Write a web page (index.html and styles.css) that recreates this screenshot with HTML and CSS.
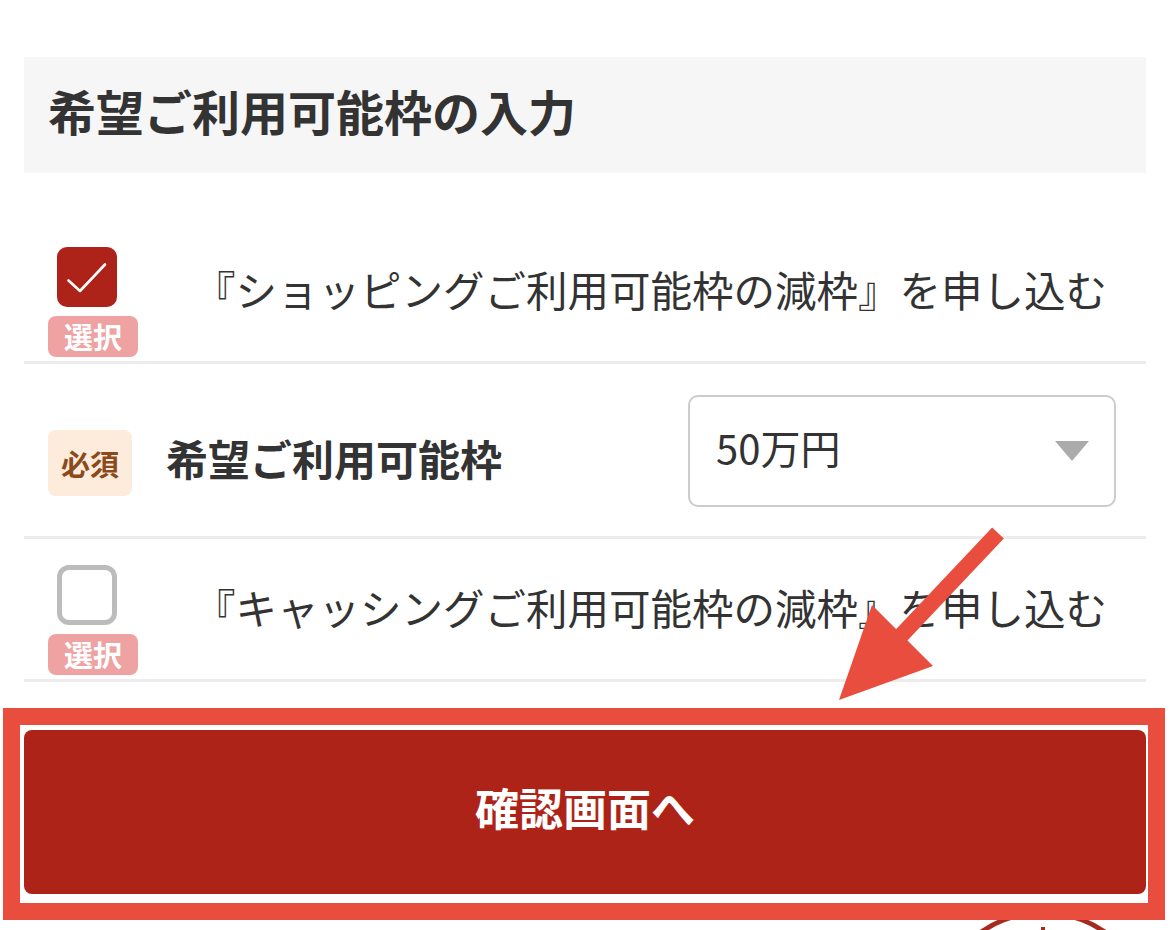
FILE: index.html
```html
<!DOCTYPE html>
<html lang="ja">
<head>
<meta charset="utf-8">
<title>希望ご利用可能枠の入力</title>
<link rel="stylesheet" href="styles.css">
</head>
<body>
<div class="page">
  <h2 class="section-title">希望ご利用可能枠の入力</h2>
  <ul class="form-list">
    <li class="row row-option">
      <div class="opt-ctrl">
        <span class="checkbox is-checked">
          <svg viewBox="0 0 60 60" width="60" height="60"><polyline points="11.5,33.5 23,44 48,17.5" fill="none" stroke="#fff" stroke-width="2.6" stroke-linecap="round" stroke-linejoin="round"/></svg>
        </span>
        <span class="tag tag-select">選択</span>
      </div>
      <p class="opt-text">『ショッピングご利用可能枠の減枠』を申し込む</p>
    </li>
    <li class="row row-field">
      <div class="field-label">
        <span class="tag tag-required">必須</span>
        <span class="label-text">希望ご利用可能枠</span>
      </div>
      <div class="select">
        <span class="select-value">50万円</span>
        <span class="caret"></span>
      </div>
    </li>
    <li class="row row-option row-last">
      <div class="opt-ctrl">
        <span class="checkbox"></span>
        <span class="tag tag-select">選択</span>
      </div>
      <p class="opt-text">『キャッシングご利用可能枠の減枠』を申し込む</p>
    </li>
  </ul>
  <div class="btn-wrap">
    <button class="btn-confirm" type="button">確認画面へ</button>
  </div>
</div>

<div class="pagetop"><span class="pagetop-tip"></span></div>
<div class="annot-frame"></div>
<svg class="annot-arrow" viewBox="0 0 1170 930" width="1170" height="930">
  <line x1="998" y1="533" x2="895" y2="642" stroke="#e84d3e" stroke-width="16"/>
  <polygon points="839,700 872,605 933,666" fill="#e84d3e"/>
</svg>
</body>
</html>
```

FILE: styles.css
```css
html, body {
  margin: 0;
  padding: 0;
  overflow: hidden;
  background: #fff;
}
body {
  position: relative;
  width: 1170px;
  height: 930px;
  font-family: "Noto Sans CJK JP", "Noto Sans", sans-serif;
  color: #333;
}
.page {
  padding: 57px 24px 0;
}
.section-title {
  margin: 0;
  box-sizing: border-box;
  height: 116px;
  line-height: 106px;
  padding: 0 0 10px 24px;
  background: #f6f6f6;
  font-size: 48px;
  font-weight: 700;
  color: #333;
}
.form-list {
  list-style: none;
  margin: 49px 0 0;
  padding: 0;
}
.row {
  display: flex;
  align-items: center;
  border-bottom: 3px solid #ececec;
  padding-left: 24px;
}
.row-option {
  padding-top: 25px;
  padding-bottom: 4px;
}
.row-last {
  padding-top: 26px;
}
.opt-ctrl {
  width: 90px;
  display: flex;
  flex-direction: column;
  align-items: flex-start;
  gap: 9px;
  flex: none;
}
.checkbox {
  box-sizing: border-box;
  width: 60px;
  height: 60px;
  margin-left: 9px;
  border: 5px solid #bcbcbc;
  border-radius: 12px;
  background: #fff;
  display: block;
}
.checkbox.is-checked {
  border: none;
  border-radius: 10px;
  background: #ad2219;
}
.checkbox svg {
  display: block;
}
.tag {
  display: block;
  font-weight: 700;
  font-size: 29px;
  border-radius: 8px;
  text-align: center;
}
.tag-select {
  width: 90px;
  height: 41px;
  line-height: 41px;
  background: #efa2a2;
  color: #fff;
}
.tag-required {
  width: 84px;
  height: 66px;
  line-height: 66px;
  background: #fdebdc;
  color: #8b4a1c;
  flex: none;
}
.opt-text {
  margin: 0 0 26px 56px;
  font-size: 41.5px;
  line-height: 1.4;
  white-space: nowrap;
  color: #333;
}
.row-field {
  padding-top: 31px;
  padding-bottom: 29px;
  padding-right: 30px;
}
.field-label {
  display: flex;
  align-items: center;
  margin-top: 24px;
}
.label-text {
  margin-left: 34px;
  margin-bottom: 12px;
  font-size: 42px;
  font-weight: 700;
  color: #333;
}
.select {
  box-sizing: border-box;
  margin-left: auto;
  width: 428px;
  height: 112px;
  border: 2px solid #cccccc;
  border-radius: 10px;
  padding-left: 26px;
  display: flex;
  align-items: center;
  background: #fff;
}
.select-value {
  font-size: 40px;
  margin-bottom: 8px;
  color: #333;
}
.caret {
  margin-left: auto;
  margin-right: 25px;
  width: 0;
  height: 0;
  border-left: 17.5px solid transparent;
  border-right: 17.5px solid transparent;
  border-top: 20px solid #ababab;
}
.btn-wrap {
  margin-top: 48px;
}
.btn-confirm {
  display: block;
  box-sizing: border-box;
  width: 100%;
  height: 164px;
  border: none;
  border-radius: 8px;
  background: #ad2318;
  color: #fff;
  font-family: "Noto Sans CJK JP", "Noto Sans", sans-serif;
  font-size: 44px;
  font-weight: 700;
  padding: 0 0 10px;
}
.pagetop {
  position: absolute;
  left: 933px;
  top: 910px;
  box-sizing: border-box;
  width: 220px;
  height: 220px;
  border: 5px solid #a62a20;
  border-radius: 50%;
  background: #fff;
}
.pagetop-tip {
  position: absolute;
  left: 103px;
  top: 12px;
  width: 4px;
  height: 12px;
  background: #a62a20;
}
.annot-frame {
  position: absolute;
  left: 3px;
  top: 708px;
  box-sizing: border-box;
  width: 1162px;
  height: 212px;
  border: 17px solid #e84d3e;
}
.annot-arrow {
  position: absolute;
  left: 0;
  top: 0;
  pointer-events: none;
}
```
